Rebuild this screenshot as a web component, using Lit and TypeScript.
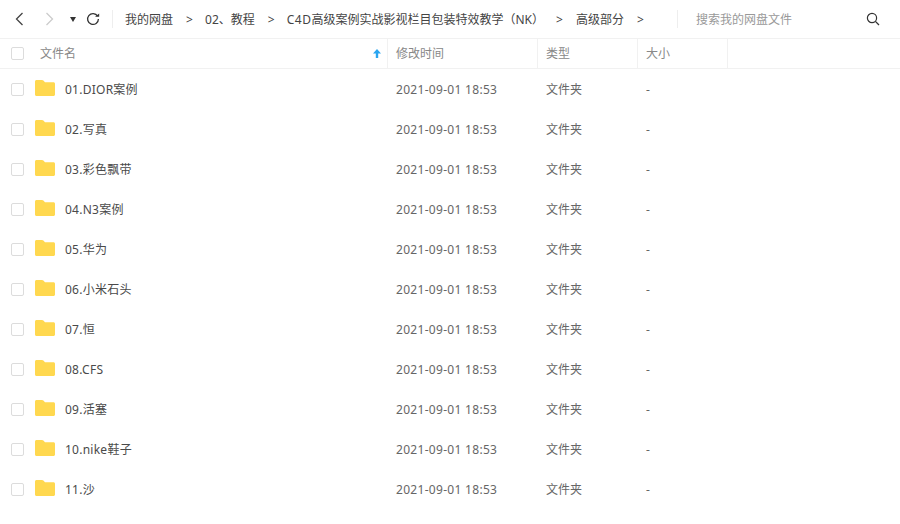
import { LitElement, html, css } from "lit";
import { customElement } from "lit/decorators.js";

const NAMES = ["01.DIOR案例","02.写真","03.彩色飘带","04.N3案例","05.华为","06.小米石头","07.恒","08.CFS","09.活塞","10.nike鞋子","11.沙"];

@customElement("app-root")
export class AppRoot extends LitElement {
  static styles = css`
    :host { display: block; width: 900px; height: 524px; overflow: hidden; background: #fff;
      font-family: "Noto Sans", "Noto Sans CJK SC", sans-serif; font-size: 12px; color: #666; }
    .toolbar { height: 39px; box-sizing: border-box; display: flex; align-items: center; border-bottom: 1px solid #f1f1f1; }
    .nav { display: flex; align-items: center; width: 113px; flex: none; height: 100%; }
    .nav svg { display: block; flex: none; }
    .back { margin-left: 15px; }
    .forward { margin-left: 21px; }
    .drop { margin-left: 16px; }
    .refresh { margin-left: 10px; }
    .sep { width: 1px; height: 18px; background: #eee; flex: none; }
    .crumbs { display: flex; align-items: center; flex: none; width: 564px; padding-left: 12px; box-sizing: border-box; white-space: nowrap; color: #444; }
    .g { width: 7px; text-align: center; flex: none; }
    .g1 { margin: 0 12px 0 13px; }
    .g2 { margin: 0 12px 0 13px; }
    .g3 { margin: 0 13px 0 12px; }
    .g4 { margin: 0 0 0 13px; }
    .lat { letter-spacing: .5px; }
    .search { color: #999; margin-left: 18px; flex: none; width: 170px; }
    .search-ico { display: block; flex: none; }
    .head { height: 30px; box-sizing: border-box; display: flex; align-items: center; border-bottom: 1px solid #f1f1f1; color: #888; }
    .cb { width: 13px; height: 13px; border: 1px solid #dcdcdc; border-radius: 2px; margin-left: 11px; flex: none; box-sizing: border-box; background: #fff; }
    .h { height: 100%; display: flex; align-items: center; box-sizing: border-box; border-right: 1px solid #f1f1f1; padding: 0 0 1px 8px; flex: none; }
    .h-name { width: 364px; padding-left: 16px; padding-right: 6px; justify-content: space-between; }
    .h-time { width: 150px; }
    .h-type { width: 100px; }
    .h-size { width: 90px; }
    .row { height: 40px; display: flex; align-items: center; }
    .folder { margin: 0 0 2px 11px; flex: none; display: block; }
    .name { width: 331px; margin-left: 10px; flex: none; color: #4a4a4a; letter-spacing: .25px; }
    .time { width: 150px; flex: none; letter-spacing: .3px; }
    .type { width: 100px; flex: none; }
    .divider-nav { margin-left: auto; }
  `;

  render() {
    return html`
      <div class="toolbar">
        <div class="nav">
          <svg class="back" width="9" height="14" viewBox="0 0 9 14"><path d="M7.500 1 1.500 7l6 6" fill="none" stroke="#444" stroke-width="1.300"/></svg>
          <svg class="forward" width="9" height="14" viewBox="0 0 9 14"><path d="M1.500 1l6 6-6 6" fill="none" stroke="#ccc" stroke-width="1.300"/></svg>
          <svg class="drop" width="6" height="5" viewBox="0 0 6 5"><path d="M0 0h6L3 5z" fill="#333"/></svg>
          <svg class="refresh" width="14" height="14" viewBox="0 0 14 14"><path d="M11.600 4.200A5.400 5.400 0 1 0 12.400 7" fill="none" stroke="#333" stroke-width="1.300"/><path d="M9 4.800h4.200V1.600z" fill="#333"/></svg>
          <span class="sep divider-nav"></span>
        </div>
        <div class="crumbs">
          <span>我的网盘</span><span class="g g1">&gt;</span>
          <span>02、教程</span><span class="g g2">&gt;</span>
          <span><span class="lat">C4D</span>高级案例实战影视栏目包装特效教学（NK）</span><span class="g g3">&gt;</span>
          <span>高级部分</span><span class="g g4">&gt;</span>
        </div>
        <span class="sep"></span>
        <span class="search">搜索我的网盘文件</span>
        <svg class="search-ico" width="14" height="14" viewBox="0 0 14 14"><circle cx="6" cy="6" r="4.600" fill="none" stroke="#333" stroke-width="1.200"/><path d="M9.400 9.400l3.600 3.600" stroke="#333" stroke-width="1.300"/></svg>
      </div>
      <div class="head">
        <span class="cb"></span>
        <div class="h h-name"><span>文件名</span>
          <svg width="8" height="9" viewBox="0 0 8 9"><path d="M4 0 8 4.500H5.200V9H2.800V4.500H0z" fill="#2aa5f0"/></svg>
        </div>
        <div class="h h-time">修改时间</div>
        <div class="h h-type">类型</div>
        <div class="h h-size">大小</div>
      </div>
      ${NAMES.map((n) => html`
        <div class="row">
          <span class="cb"></span>
          <svg class="folder" width="20" height="16" viewBox="0 0 20 16"><path d="M1.500 0h5.500c.6 0 1 .2 1.400.6L10 2.200H18.500c.8 0 1.500.7 1.500 1.500V14.500c0 .8-.7 1.500-1.500 1.500h-17C.7 16 0 15.300 0 14.500V1.500C0 .7.700 0 1.500 0z" fill="#ffd84f"/></svg>
          <span class="name">${n}</span>
          <span class="time">2021-09-01 18:53</span>
          <span class="type">文件夹</span>
          <span>-</span>
        </div>`)}
    `;
  }
}
